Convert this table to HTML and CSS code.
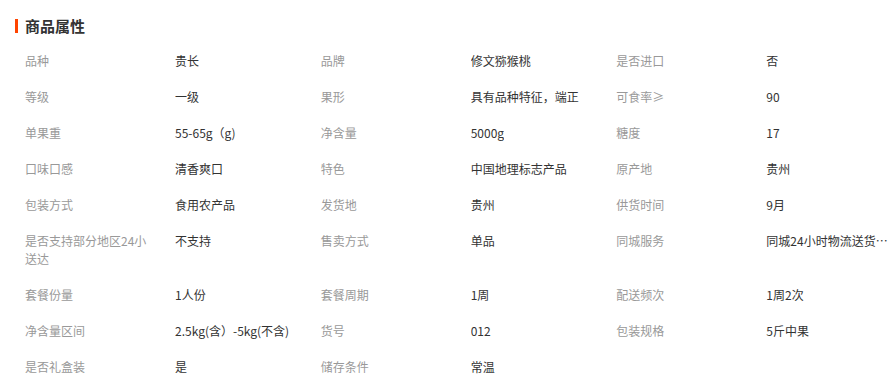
FILE: index.html
```html
<!DOCTYPE html>
<html lang="zh-CN">
<head>
<meta charset="utf-8">
<title>商品属性</title>
<link rel="stylesheet" href="styles.css">
</head>
<body>
<div class="attrs">
  <h3 class="attrs-title">商品属性</h3>
  <ul class="attrs-list">
    <li class="attr"><span class="attr-name">品种</span><span class="attr-value">贵长</span></li>
    <li class="attr"><span class="attr-name">品牌</span><span class="attr-value">修文猕猴桃</span></li>
    <li class="attr"><span class="attr-name">是否进口</span><span class="attr-value">否</span></li>

    <li class="attr"><span class="attr-name">等级</span><span class="attr-value">一级</span></li>
    <li class="attr"><span class="attr-name">果形</span><span class="attr-value">具有品种特征，端正</span></li>
    <li class="attr"><span class="attr-name">可食率≥</span><span class="attr-value">90</span></li>

    <li class="attr"><span class="attr-name">单果重</span><span class="attr-value">55-65g（g)</span></li>
    <li class="attr"><span class="attr-name">净含量</span><span class="attr-value">5000g</span></li>
    <li class="attr"><span class="attr-name">糖度</span><span class="attr-value">17</span></li>

    <li class="attr"><span class="attr-name">口味口感</span><span class="attr-value">清香爽口</span></li>
    <li class="attr"><span class="attr-name">特色</span><span class="attr-value">中国地理标志产品</span></li>
    <li class="attr"><span class="attr-name">原产地</span><span class="attr-value">贵州</span></li>

    <li class="attr"><span class="attr-name">包装方式</span><span class="attr-value">食用农产品</span></li>
    <li class="attr"><span class="attr-name">发货地</span><span class="attr-value">贵州</span></li>
    <li class="attr"><span class="attr-name">供货时间</span><span class="attr-value">9月</span></li>

    <li class="attr"><span class="attr-name">是否支持部分地区24小送达</span><span class="attr-value">不支持</span></li>
    <li class="attr"><span class="attr-name">售卖方式</span><span class="attr-value">单品</span></li>
    <li class="attr"><span class="attr-name">同城服务</span><span class="attr-value">同城24小时物流送货上门</span></li>

    <li class="attr"><span class="attr-name">套餐份量</span><span class="attr-value">1人份</span></li>
    <li class="attr"><span class="attr-name">套餐周期</span><span class="attr-value">1周</span></li>
    <li class="attr"><span class="attr-name">配送频次</span><span class="attr-value">1周2次</span></li>

    <li class="attr"><span class="attr-name">净含量区间</span><span class="attr-value">2.5kg(含）-5kg(不含)</span></li>
    <li class="attr"><span class="attr-name">货号</span><span class="attr-value">012</span></li>
    <li class="attr"><span class="attr-name">包装规格</span><span class="attr-value">5斤中果</span></li>

    <li class="attr"><span class="attr-name">是否礼盒装</span><span class="attr-value">是</span></li>
    <li class="attr"><span class="attr-name">储存条件</span><span class="attr-value">常温</span></li>
  </ul>
</div>
</body>
</html>
```
FILE: styles.css
```css
html, body {
  margin: 0;
  padding: 0;
  background: #fff;
}

body {
  font-family: "Noto Sans CJK SC", "Noto Sans", sans-serif;
  font-size: 12px;
  color: #333;
  overflow: hidden;
}

.attrs {
  padding: 16px 0 0 15px;
}

.attrs-title {
  margin: 0;
  margin-top: 3px;
  padding-left: 7px;
  border-left: 3px solid #ff4400;
  font-size: 15px;
  font-weight: bold;
  line-height: 14px;
  height: 14px;
  color: #333;
}

.attrs-list {
  list-style: none;
  margin: 0;
  padding: 0;
  margin-top: 10px;
  margin-left: 10px;
  width: 887px;
  display: grid;
  grid-template-columns: repeat(3, 295.67px);
}

.attr {
  display: flex;
  align-items: flex-start;
  padding: 9px 0;
  line-height: 18px;
}

.attr-name {
  width: 125px;
  margin-right: 25px;
  color: #999;
  flex: none;
}

.attr-value {
  max-width: 124px;
  white-space: nowrap;
  overflow: hidden;
  text-overflow: ellipsis;
  color: #333;
}
```
